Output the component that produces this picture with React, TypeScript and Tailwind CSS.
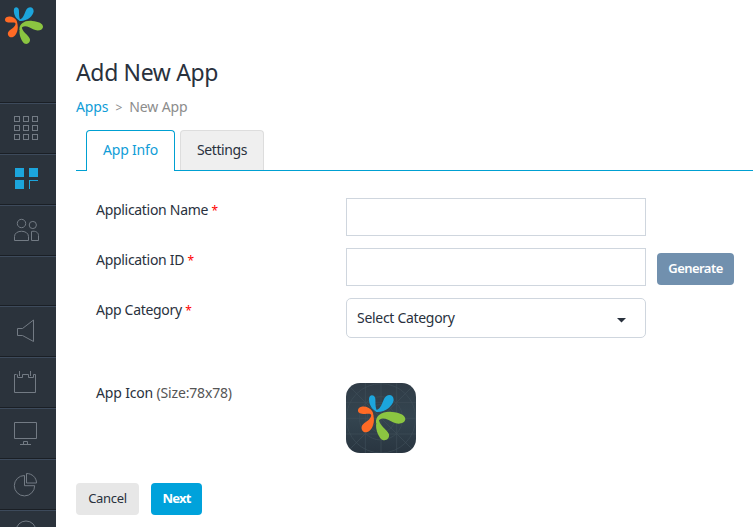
import type { ReactNode } from "react";

function Petals() {
  return (
    <g transform="translate(54 48)">
      <path fill="#1ca5dc" d="M68 62C53 56 45 40 45 24C45 9 62 9 64 23C65 37 63 49 70 60Z" />
      <path fill="#1ca5dc" d="M62 58C79 57 82 42 90 24C98 7 119 9 119 27C117 45 94 64 69 63C66 62 63 61 62 58Z" />
      <path fill="#ff6a25" d="M12 59C12 46 31 44 43 50C53 55 59 64 58 76L54 78C51 64 41 70 31 69C21 68 12 66 12 59Z" />
      <path fill="#ff6a25" d="M53 63C62 76 63 98 51 115C39 131 20 123 23 107C28 91 54 92 53 63Z" />
      <path fill="#8bc541" d="M66 96C64 73 86 60 114 63C137 65 154 72 154 85C152 99 131 101 117 94C101 85 79 72 70 96Z" />
      <path fill="#8bc541" d="M74 80C74 105 98 112 105 130C108 147 88 155 78 140C67 123 60 99 74 80Z" />
    </g>
  );
}

function Icon({ children }: { children?: ReactNode }) {
  return (
    <svg width="56" height="49" viewBox="0 0 56 49" fill="none" stroke="#737b84" className="block">
      {children}
    </svg>
  );
}

function Cell({ children, short }: { children?: ReactNode; short?: boolean }) {
  return (
    <div className={`shrink-0 border-t border-t-[#3d4a5b] border-b border-b-[#1a1f25] ${short ? "h-[50px]" : "h-[51px]"}`}>
      {children}
    </div>
  );
}

function Sidebar() {
  return (
    <aside className="flex h-full w-14 shrink-0 flex-col overflow-hidden bg-[#2b333c]">
      <div className="h-[103px] shrink-0 border-b border-b-[#1a1f25]">
        <svg width="56" height="102" viewBox="0 0 56 102">
          <g transform="translate(-12.7 -9) scale(0.268 0.27)">
            <Petals />
          </g>
        </svg>
      </div>
      <Cell>
        <Icon>
          {[14.5, 23.5, 32.5].map((x) =>
            [12.5, 21.5, 30.5].map((y) => <rect key={`${x}-${y}`} x={x} y={y} width="5" height="5" />)
          )}
        </Icon>
      </Cell>
      <Cell>
        <Icon>
          <path fill="#1ca5dc" stroke="none" d="M15 13h9v9h-9zM29 13h9v9h-9zM15 25h9v9h-9zM29 25h9v1h-8v8h-1z" />
        </Icon>
      </Cell>
      <Cell>
        <Icon>
          <circle cx="21.5" cy="17.5" r="4.2" />
          <circle cx="32.8" cy="19" r="3.6" />
          <path d="M14.5 34.5v-4c0-7 14-7 14 0v4zM31.5 34.5v-9c4-1 7 1 7 4v5z" />
        </Icon>
      </Cell>
      <Cell short />
      <Cell>
        <Icon>
          <path d="M17.5 21.5h5l11-8.5v21.5l-11-6h-5z" />
        </Icon>
      </Cell>
      <Cell>
        <Icon>
          <path d="M16.5 16.5h-2v18h21v-18h-2v3h-5v-3h-6v3h-5v-3M19.5 13v5M30.5 13v5" />
        </Icon>
      </Cell>
      <Cell>
        <Icon>
          <path d="M14.5 13.5h22v16h-22zM20 35.5h11M23.5 35v-2.500h4v2.500" />
        </Icon>
      </Cell>
      <Cell>
        <Icon>
          <path d="M24.5 15.5a10.200 10.200 0 1 0 10.200 10.200h-10.200zM26.5 13.5v9.500h10c0-5.500-4.500-9.500-10-9.500z" />
        </Icon>
      </Cell>
      <Cell>
        <Icon>
          <circle cx="26" cy="20" r="10" />
        </Icon>
      </Cell>
    </aside>
  );
}

function Field({ label, children }: { label: string; children: ReactNode }) {
  return (
    <div className="flex items-start">
      <label className="w-[250px] pt-0.5 leading-5">
        {label} <span className="text-xs text-[#ff0000]">*</span>
      </label>
      {children}
    </div>
  );
}

function AppIcon() {
  return (
    <svg width="70" height="70" viewBox="30 24 210 210" className="block">
      <defs>
        <linearGradient id="tile" x2="0" y2="1">
          <stop stopColor="#303c47" />
          <stop offset=".5" stopColor="#344550" />
          <stop offset="1" stopColor="#293540" />
        </linearGradient>
        <clipPath id="round">
          <rect x="30" y="24" width="210" height="210" rx="42" />
        </clipPath>
      </defs>
      <g clipPath="url(#round)">
        <rect x="30" y="24" width="210" height="210" fill="url(#tile)" />
        <g fill="none" stroke="#3f4f59" strokeWidth="2">
          <circle cx="135" cy="130" r="104" />
          <circle cx="135" cy="130" r="65" />
          <circle cx="135" cy="130" r="42" />
          <path d="M30 24l210 210M240 24L30 234M30 130h210M135 24v210M88 24v210M182 24v210M30 83h210M30 177h210" />
        </g>
        <Petals />
      </g>
    </svg>
  );
}

export default function App() {
  return (
    <div className="flex h-[527px] w-[753px] overflow-hidden bg-white font-['Noto_Sans',sans-serif] text-sm tracking-[-0.3px] text-[#29313d]">
      <Sidebar />
      <main className="flex min-w-0 flex-1 flex-col pl-5">
        <h1 className="mt-14 text-[23px] leading-8 tracking-[-0.35px]">Add New App</h1>
        <nav className="mt-[9px] flex leading-5 tracking-[-0.1px]">
          <a className="text-[#0f9dd7]">Apps</a>
          <span className="ml-[7px] text-xs leading-[22px] text-[#8c8c8c]">&gt;</span>
          <span className="ml-[7px] text-[#8c8c8c]">New App</span>
        </nav>
        <div className="mt-[11px] flex h-[41px] border-b border-[#00a0d2] pl-2.5">
          <div className="h-[41px] w-[89px] rounded-t border border-b-0 border-[#00a0d2] bg-white pt-[9px] text-center leading-5 tracking-[-0.2px] text-[#0f9dd7]">
            App Info
          </div>
          <div className="ml-[5px] h-10 w-[84px] rounded-t border border-b-0 border-[#dddddd] bg-[#efefef] pt-[9px] text-center leading-5 tracking-[-0.4px]">
            Settings
          </div>
        </div>
        <form className="mt-[27px] flex flex-col gap-3 pl-5">
          <Field label="Application Name">
            <div className="h-[38px] w-[300px] border border-[#cfd6de]" />
          </Field>
          <Field label="Application ID">
            <div className="h-[38px] w-[300px] border border-[#cfd6de]" />
            <button type="button" className="mt-[5px] ml-[11px] h-8 w-[77px] rounded bg-[#7190ae] pb-px text-[13px] font-semibold tracking-[-0.55px] text-white">
              Generate
            </button>
          </Field>
          <Field label="App Category">
            <div className="flex h-10 w-[300px] items-center justify-between rounded-[5px] border border-[#cfd6de] pr-[19px] pl-2.5">
              <span>Select Category</span>
              <svg width="9" height="5" viewBox="0 0 9 5" className="mt-1"><path fill="#29313d" d="M0 0h9L4.5 4.5z" /></svg>
            </div>
          </Field>
        </form>
        <div className="mt-[45px] flex pl-5">
          <span className="w-[250px] leading-5 tracking-[-0.17px]">
            App Icon <span className="text-[#555555]">(Size:78x78)</span>
          </span>
          <AppIcon />
        </div>
        <div className="mt-[30px] flex gap-3 text-[13px]">
          <button type="button" className="h-8 w-[63px] rounded bg-[#e7e7e7] pb-0.5">Cancel</button>
          <button type="button" className="h-8 w-[51px] rounded bg-[#00a2db] pb-0.5 font-bold tracking-[-0.8px] text-white">Next</button>
        </div>
      </main>
    </div>
  );
}
